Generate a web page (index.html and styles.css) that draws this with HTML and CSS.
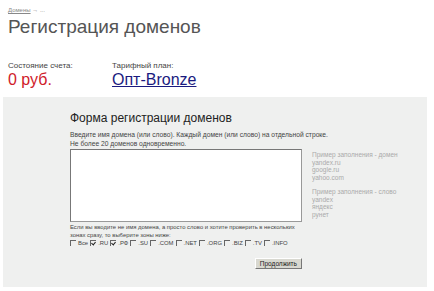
FILE: index.html
```html
<!DOCTYPE html>
<html lang="ru">
<head>
  <meta charset="UTF-8">
  <title>Регистрация доменов</title>
  <link rel="stylesheet" href="styles.css">
</head>
<body>
  <div class="top">
    <div class="crumbs"><a href="#">Домены</a> → ...</div>
    <h1>Регистрация доменов</h1>
    <div class="account">
      <div class="acc-item">
        <div class="acc-label">Состояние счета:</div>
        <div class="balance">0 руб.</div>
      </div>
      <div class="acc-item">
        <div class="acc-label">Тарифный план:</div>
        <a class="plan" href="#">Опт-Bronze</a>
      </div>
    </div>
  </div>

  <div class="panel">
    <h2>Форма регистрации доменов</h2>
    <p class="intro">Введите имя домена (или слово). Каждый домен (или слово) на отдельной строке.<br>Не более 20 доменов одновременно.</p>
    <div class="form-row">
      <div class="form-main">
        <textarea class="domains"></textarea>
        <p class="note">Если вы вводите не имя домена, а просто слово и хотите проверить в нескольких<br>зонах сразу, то выберите зоны ниже:</p>
        <div class="zones">
          <label><span class="box"></span>Все</label>
          <label><span class="box checked"></span>.RU</label>
          <label><span class="box checked"></span>.РФ</label>
          <label><span class="box"></span>.SU</label>
          <label><span class="box"></span>.COM</label>
          <label><span class="box"></span>.NET</label>
          <label><span class="box"></span>.ORG</label>
          <label><span class="box"></span>.BIZ</label>
          <label><span class="box"></span>.TV</label>
          <label><span class="box"></span>.INFO</label>
        </div>
        <div class="actions">
          <button class="submit">Продолжить</button>
        </div>
      </div>
      <div class="hints">
        <p>Пример заполнения - домен<br>yandex.ru<br>google.ru<br>yahoo.com</p>
        <p>Пример заполнения - слово<br>yandex<br>яндекс<br>рунет</p>
      </div>
    </div>
  </div>
</body>
</html>
```

FILE: styles.css
```css
body {
  margin: 0;
  font-family: "Liberation Sans", Arial, sans-serif;
  color: #333;
  background: #fff;
}

.top {
  padding: 7px 8px 0;
}

.crumbs {
  font-size: 6px;
  color: #888;
  line-height: 7px;
}

.crumbs a {
  color: #888;
}

h1 {
  margin: 2px 0 0;
  font-size: 19px;
  font-weight: normal;
  color: #555;
  line-height: 22px;
}

.account {
  display: flex;
  margin-top: 23px;
}

.acc-item {
  width: 104px;
}

.acc-label {
  font-size: 8px;
  line-height: 10px;
  color: #444;
}

.balance {
  font-size: 16px;
  line-height: 18px;
  color: #d0202a;
}

.plan {
  font-size: 16px;
  line-height: 18px;
  color: #1a1a80;
}

.panel {
  margin: 8px 7px 0 3px;
  height: 190px;
  box-sizing: border-box;
  padding: 14px 0 0 67px;
  background: #eff0ef;
}

h2 {
  margin: 0;
  font-size: 12px;
  font-weight: normal;
  color: #222;
  line-height: 15px;
}

.intro {
  margin: 5px 0 0;
  font-size: 6.7px;
  line-height: 8.5px;
  color: #444;
}

.form-row {
  display: flex;
  margin-top: 1px;
}

.form-main {
  width: 232px;
}

.domains {
  display: block;
  width: 232px;
  height: 73px;
  box-sizing: border-box;
  margin: 0;
  border: 1px solid #999;
  border-top-color: #777;
  border-left-color: #777;
  background: #fff;
  resize: none;
}

.note {
  margin: 1px 0 0;
  font-size: 5.9px;
  line-height: 8px;
  color: #444;
  white-space: nowrap;
}

.zones {
  display: flex;
  gap: 2px;
  margin-top: 0;
  font-size: 5.9px;
  line-height: 8px;
  color: #444;
}

.zones label {
  display: flex;
  align-items: center;
  gap: 2px;
}

.box {
  width: 6px;
  height: 6px;
  box-sizing: border-box;
  border-top: 1px solid #666;
  border-left: 1px solid #666;
  position: relative;
}

.box.checked::after {
  content: "";
  position: absolute;
  left: 1px;
  top: 0;
  width: 2px;
  height: 3px;
  border-right: 1px solid #222;
  border-bottom: 1px solid #222;
  transform: rotate(40deg);
}

.actions {
  text-align: right;
  margin-top: 5px;
}

.submit {
  font-family: "Liberation Sans", Arial, sans-serif;
  font-size: 6.5px;
  padding: 1px 4px;
  height: 11px;
  color: #222;
  background: #d8d8d0;
  border: 1px solid;
  border-color: #fff #777 #777 #fff;
}

.hints {
  margin-left: 10px;
  padding-top: 2px;
  font-size: 6.5px;
  line-height: 7.5px;
  color: #aaa;
}

.hints p {
  margin: 0 0 7px;
}
```
